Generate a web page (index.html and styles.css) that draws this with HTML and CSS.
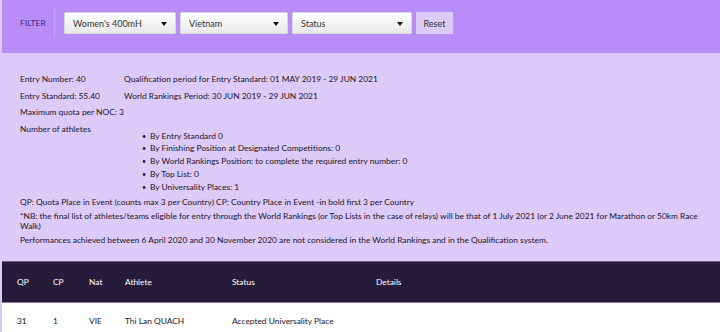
FILE: index.html
```html
<!DOCTYPE html>
<html lang="en">
  <head>
    <meta charset="UTF-8" />
    <meta name="viewport" content="width=device-width, initial-scale=1.0" />
    <title>Qualification - Women's 400mH</title>
    <link rel="stylesheet" href="styles.css">
  </head>
  <body>
    <div class="pagina">
      <div class="filtro">
        <div class="filtro-titulo">FILTER</div>
        <div class="selecao sel-evento">Women's 400mH<span class="seta"></span></div>
        <div class="selecao sel-pais">Vietnam<span class="seta"></span></div>
        <div class="selecao sel-status">Status<span class="seta"></span></div>
        <button class="botao-reset">Reset</button>
      </div>

      <div class="info">
        <div class="info-grade">
          <div>Entry Number: 40</div>
          <div>Qualification period for Entry Standard: 01 MAY 2019 - 29 JUN 2021</div>
          <div>Entry Standard: 55.40</div>
          <div>World Rankings Period: 30 JUN 2019 - 29 JUN 2021</div>
          <div class="linha-toda">Maximum quota per NOC: 3</div>
          <div class="linha-toda">Number of athletes</div>
        </div>
        <ul class="lista">
          <li>By Entry Standard 0</li>
          <li>By Finishing Position at Designated Competitions: 0</li>
          <li>By World Rankings Position: to complete the required entry number: 0</li>
          <li>By Top List: 0</li>
          <li>By Universality Places: 1</li>
        </ul>
        <p>QP: Quota Place in Event (counts max 3 per Country) CP: Country Place in Event -in bold first 3 per Country</p>
        <p>*NB: the final list of athletes/teams eligible for entry through the World Rankings (or Top Lists in the case of relays) will be that of 1 July 2021 (or 2 June 2021 for Marathon or 50km Race Walk)</p>
        <p>Performances achieved between 6 April 2020 and 30 November 2020 are not considered in the World Rankings and in the Qualification system.</p>
      </div>

      <table class="tabela">
        <thead>
          <tr>
            <th class="col-qp">QP</th>
            <th class="col-cp">CP</th>
            <th class="col-nat">Nat</th>
            <th class="col-atleta">Athlete</th>
            <th class="col-status">Status</th>
            <th>Details</th>
          </tr>
        </thead>
        <tbody>
          <tr>
            <td>31</td>
            <td>1</td>
            <td>VIE</td>
            <td>Thi Lan QUACH</td>
            <td>Accepted Universality Place</td>
            <td></td>
          </tr>
        </tbody>
      </table>
    </div>
  </body>
</html>
```

FILE: styles.css
```css
* {
  margin: 0;
  padding: 0;
  box-sizing: border-box;
}
body {
  background-color: #dccbf9;
  font-family: Lato, "Liberation Sans", sans-serif;
  color: #1b1428;
  font-size: 8.4px;
}
.pagina {
  padding-left: 2px;
}
.filtro {
  background-color: #b98df8;
  height: 53px;
  display: flex;
  align-items: flex-start;
  padding: 8px 0 0 18px;
}
.filtro-titulo {
  height: 30px;
  line-height: 30px;
  width: 35px;
  border-right: 1px solid #c8a6fa;
  margin-right: 9px;
  color: #432779;
  font-size: 8.4px;
}
.selecao {
  position: relative;
  margin-top: 4px;
  margin-right: 4px;
  height: 22px;
  line-height: 22px;
  padding-left: 8px;
  font-size: 9px;
  color: #333;
  background: linear-gradient(#ffffff, #e9e9e9);
  border: 1px solid #d8d8d8;
  border-radius: 1px;
}
.sel-evento {
  width: 112px;
}
.sel-pais {
  width: 108px;
}
.sel-status {
  width: 120px;
}
.seta {
  position: absolute;
  right: 8px;
  top: 9px;
  border-left: 3px solid transparent;
  border-right: 3px solid transparent;
  border-top: 4px solid #111;
}
.botao-reset {
  margin-top: 4px;
  width: 37px;
  height: 22px;
  border: none;
  background-color: #dccbf8;
  color: #333;
  font-family: inherit;
  font-size: 9px;
}
.info {
  padding: 21px 8px 16px 18px;
}
.info-grade {
  display: grid;
  grid-template-columns: 104px 1fr;
  row-gap: 6.5px;
  line-height: 10px;
}
.linha-toda {
  grid-column: 1 / 3;
}
.lista {
  padding-left: 122px;
  margin-top: -4px;
  line-height: 12.75px;
  list-style: none;
}
.lista li::before {
  content: "\2022";
  display: inline-block;
  width: 8px;
  font-size: 7px;
}
.info p {
  line-height: 10px;
  margin-top: 4px;
}
.tabela {
  width: 100%;
  border-collapse: collapse;
}
.tabela th {
  background-color: #271b3b;
  color: #ffffff;
  font-weight: normal;
  text-align: left;
  height: 41px;
  border-top: 1px solid #6e5f86;
  border-bottom: 1px solid #8d7fa4;
}
.tabela td {
  background-color: #ffffff;
  height: 36px;
  vertical-align: top;
  padding-top: 13px;
}
.tabela th:first-child,
.tabela td:first-child {
  padding-left: 15px;
}
.col-qp {
  width: 51px;
}
.col-cp,
.col-nat {
  width: 36px;
}
.col-atleta {
  width: 107px;
}
.col-status {
  width: 144px;
}
```
